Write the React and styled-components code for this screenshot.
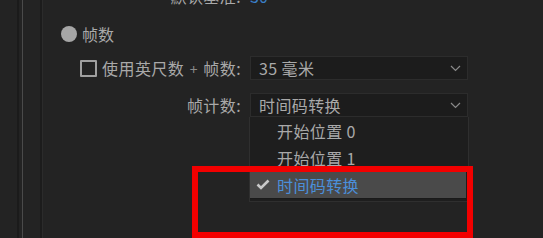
import React from "react";
import styled, { createGlobalStyle } from "styled-components";

const GlobalStyle = createGlobalStyle`
  html, body {
    margin: 0;
    padding: 0;
    background: #232323;
    overflow: hidden;
  }
  body {
    font-family: "Noto Sans CJK SC", "Noto Sans", sans-serif;
    color: #a9a9a9;
  }
`;

const Page = styled.div`
  position: relative;
  display: flex;
  width: 543px;
  height: 238px;
  overflow: hidden;
  background: #232323;
`;

const Gutter = styled.div`
  display: flex;
  flex-shrink: 0;
  width: 43px;
  height: 100%;
`;

const GutterLine = styled.div`
  flex-shrink: 0;
  width: ${(p) => p.$w}px;
  margin-left: ${(p) => p.$ml}px;
  background: ${(p) => p.$color};
`;

const Content = styled.div`
  display: flex;
  flex-direction: column;
  flex: 1;
  font-size: 16px;
`;

const Row = styled.div`
  display: grid;
  grid-template-columns: 198px 218px;
  column-gap: 9px;
  align-items: center;
  height: 24px;
  margin-top: ${(p) => p.$top}px;
  flex-shrink: 0;
`;

const RadioRow = styled.div`
  display: flex;
  align-items: center;
  gap: 5px;
  height: 24px;
  padding-left: 18px;
  margin-top: 14px;
  flex-shrink: 0;
`;

const Radio = styled.span`
  width: 16px;
  height: 16px;
  border-radius: 50%;
  background: #a6a6a6;
`;

const Label = styled.div`
  display: flex;
  align-items: center;
  justify-content: flex-end;
  gap: 5px;
  white-space: nowrap;
  letter-spacing: 0.4px;
`;

const Plus = styled.span`
  font-size: 14px;
  color: #8a8a8a;
  margin: 0 2px;
`;

const Checkbox = styled.span`
  box-sizing: border-box;
  width: 17px;
  height: 17px;
  border: 2px solid #a0a0a0;
  border-radius: 1px;
`;

const Value = styled.span`
  color: #3a7fc8;
`;

const Select = styled.div`
  position: relative;
  box-sizing: border-box;
  height: 24px;
  display: flex;
  align-items: center;
  justify-content: space-between;
  padding: 0 6px 0 8px;
  background: #1c1c1c;
  border: 1px solid #2c2c2c;
  letter-spacing: 0.4px;
`;

const Menu = styled.div`
  position: absolute;
  top: calc(100% + 1px);
  left: -2px;
  right: -2px;
  box-sizing: border-box;
  background: #1e1e1e;
  border: 1px solid #2f2f2f;
  border-top: none;
  padding-bottom: 2px;
  z-index: 2;
`;

const MenuItem = styled.div`
  display: flex;
  align-items: center;
  height: 27px;
  margin-right: 2px;
  background: ${(p) => (p.$selected ? "#4a4a4a" : "transparent")};
  color: ${(p) => (p.$selected ? "#4b8fda" : "#a9a9a9")};
  border-bottom: ${(p) => (p.$selected ? "1px solid #1a1a1a" : "none")};
`;

const CheckSlot = styled.span`
  display: flex;
  align-items: center;
  width: 21px;
  padding-left: 6px;
  flex-shrink: 0;
`;

const Marker = styled.div`
  position: absolute;
  left: 192px;
  top: 166px;
  width: 281px;
  height: 72px;
  box-sizing: border-box;
  border: 6px solid #f20000;
  pointer-events: none;
  z-index: 3;
`;

const Chevron = () => (
  <svg width="11" height="7" viewBox="0 0 11 7">
    <path d="M1 1 L5.5 5.5 L10 1" fill="none" stroke="#8a8a8a" strokeWidth="1.2" />
  </svg>
);

const Check = () => (
  <svg width="14" height="11" viewBox="0 0 14 11">
    <path d="M1.5 5.5 L5 9 L12.5 1.5" fill="none" stroke="#c9c9c9" strokeWidth="2.6" />
  </svg>
);

export default function App() {
  const options = ["开始位置 0", "开始位置 1", "时间码转换"];
  return (
    <>
      <GlobalStyle />
      <Page>
        <Gutter>
          <GutterLine $ml={17} $w={2} $color="#1b1b1b" />
          <GutterLine $ml={3} $w={1} $color="#4a4a4a" />
          <GutterLine $ml={17} $w={2} $color="#1c1c1c" />
          <GutterLine $ml={0} $w={1} $color="#2b2b2b" />
        </Gutter>
        <Content>
          <Row $top={-16}>
            <Label>默认基准:</Label>
            <Value>30</Value>
          </Row>
          <RadioRow>
            <Radio />
            帧数
          </RadioRow>
          <Row $top={10}>
            <Label>
              <Checkbox />
              <span>
                使用英尺数<Plus> + </Plus>帧数:
              </span>
            </Label>
            <Select>
              <span>35 毫米</span>
              <Chevron />
            </Select>
          </Row>
          <Row $top={13}>
            <Label>帧计数:</Label>
            <Select>
              <span>时间码转换</span>
              <Chevron />
              <Menu>
                {options.map((o, i) => (
                  <MenuItem key={o} $selected={i === 2}>
                    <CheckSlot>{i === 2 && <Check />}</CheckSlot>
                    {o}
                  </MenuItem>
                ))}
              </Menu>
            </Select>
          </Row>
        </Content>
        <Marker />
      </Page>
    </>
  );
}
